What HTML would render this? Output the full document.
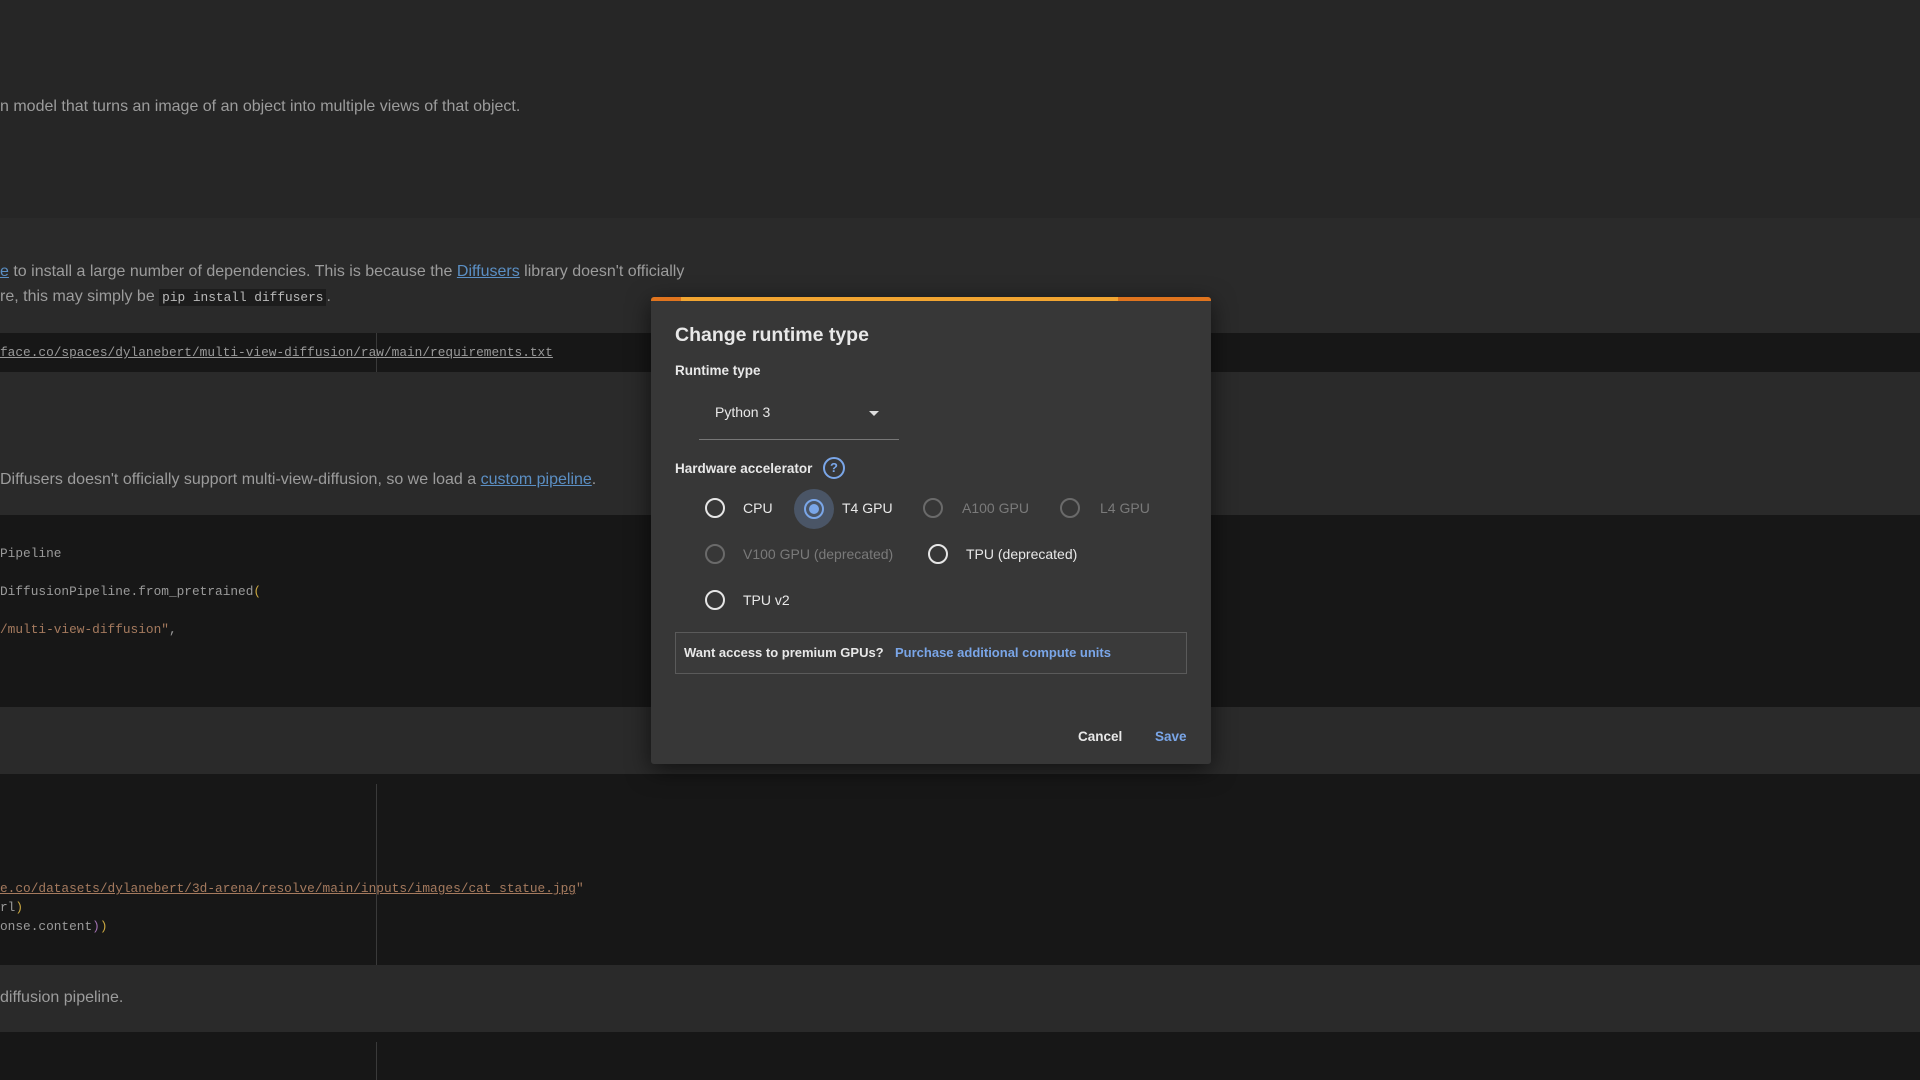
<!DOCTYPE html>
<html><head><meta charset="utf-8"><style>
*{margin:0;padding:0;box-sizing:border-box}
body{width:1920px;height:1080px;overflow:hidden;background:#262626;font-family:"Liberation Sans",Arial,sans-serif;position:relative}
.a{position:absolute;white-space:nowrap}
.band{position:absolute;left:0;width:1920px}
.t{color:#9c9c9c;font-size:16px}
.c{color:#9a9a9a;font-family:"Liberation Mono",monospace;font-size:12.8px}
.lk{color:#5b8fc4;text-decoration:underline}
.str{color:#a57a5e}
.vl{position:absolute;left:376px;width:1px;background:#3a3a3a}
.dlg{position:absolute;left:651px;top:297px;width:560px;height:467px;background:#373737;border-radius:3px;box-shadow:0 6px 24px rgba(0,0,0,.6);overflow:hidden}
.d{position:absolute;white-space:nowrap;color:#e8e8e8}
.r{position:absolute;width:20px;height:20px;border:2px solid #e6e6e6;border-radius:50%}
.r.dis{border-color:#6a6a6a}
.lab{position:absolute;font-size:14px;color:#e8e8e8;white-space:nowrap}
.lab.dis{color:#7a7a7a}
</style></head><body>
<div class="band" style="top:0;height:218px;background:#262626"></div>
<div class="band" style="top:218px;height:115px;background:#2a2a2a"></div>
<div class="band" style="top:333px;height:39px;background:#171717"></div>
<div class="band" style="top:372px;height:143px;background:#2a2a2a"></div>
<div class="band" style="top:515px;height:192px;background:#171717"></div>
<div class="band" style="top:707px;height:67px;background:#2a2a2a"></div>
<div class="band" style="top:774px;height:191px;background:#171717"></div>
<div class="band" style="top:965px;height:67px;background:#2a2a2a"></div>
<div class="band" style="top:1032px;height:48px;background:#171717"></div>
<div class="vl" style="top:333px;height:39px"></div>
<div class="vl" style="top:784px;height:181px"></div>
<div class="vl" style="top:1042px;height:38px"></div>

<div class="a t" style="left:0;top:98px">n model that turns an image of an object into multiple views of that object.</div>
<div class="a t" style="left:0;top:263px"><span class="lk">e</span> to install a large number of dependencies. This is because the <span class="lk">Diffusers</span> library doesn't officially</div>
<div class="a t" style="left:0;top:288px">re, this may simply be <span class="c" style="background:#1c1c1c;padding:1px 3px;color:#bbb">pip install diffusers</span>.</div>
<div class="a c" style="left:0;top:345px;text-decoration:underline">face.co/spaces/dylanebert/multi-view-diffusion/raw/main/requirements.txt</div>
<div class="a t" style="left:0;top:471px">Diffusers doesn't officially support multi-view-diffusion, so we load a <span class="lk">custom pipeline</span>.</div>
<div class="a c" style="left:0;top:546px">Pipeline</div>
<div class="a c" style="left:0;top:584px"> DiffusionPipeline.from_pretrained<span style="color:#c9a640">(</span></div>
<div class="a c" style="left:0;top:622px"><span class="str">/multi-view-diffusion"</span>,</div>
<div class="a c" style="left:0;top:881px"><span class="str" style="text-decoration:underline">e.co/datasets/dylanebert/3d-arena/resolve/main/inputs/images/cat_statue.jpg</span><span class="str">"</span></div>
<div class="a c" style="left:0;top:900px">rl<span style="color:#c9a640">)</span></div>
<div class="a c" style="left:0;top:919px">onse.content<span style="color:#a070b0">)</span><span style="color:#c9a640">)</span></div>
<div class="a t" style="left:0;top:989px">diffusion pipeline.</div>

<div class="dlg">
 <div style="position:absolute;left:0;top:0;height:4px;width:30px;background:#e0741e"></div>
 <div style="position:absolute;left:30px;top:0;height:4px;width:437px;background:#f2a531"></div>
 <div style="position:absolute;left:467px;top:0;height:4px;width:93px;background:#e0741e"></div>
 <div class="d" style="left:24px;top:27px;font-size:19.5px;font-weight:bold">Change runtime type</div>
 <div class="d" style="left:24px;top:66px;font-size:13.5px;font-weight:bold">Runtime type</div>
 <div class="d" style="left:64px;top:107px;font-size:14px">Python 3</div>
 <div style="position:absolute;left:218px;top:114px;width:0;height:0;border-left:5px solid transparent;border-right:5px solid transparent;border-top:5px solid #ddd"></div>
 <div style="position:absolute;left:48px;top:142px;width:200px;height:1px;background:#777"></div>
 <div class="d" style="left:24px;top:164px;font-size:13.5px;font-weight:bold">Hardware accelerator</div>
 <div style="position:absolute;left:172px;top:160px;width:22px;height:22px;border:2px solid #7aa6e8;border-radius:50%;color:#7aa6e8;font-size:13px;font-weight:bold;text-align:center;line-height:18px">?</div>

 <div class="r" style="left:54px;top:201px"></div><div class="lab" style="left:92px;top:203px">CPU</div>
 <div style="position:absolute;left:143px;top:192px;width:40px;height:40px;border-radius:50%;background:#4a5566"></div>
 <div class="r" style="left:153px;top:202px;border-color:#7aa6e8"><div style="position:absolute;left:3px;top:3px;width:10px;height:10px;border-radius:50%;background:#7aa6e8"></div></div>
 <div class="lab" style="left:191px;top:203px">T4 GPU</div>
 <div class="r dis" style="left:272px;top:201px"></div><div class="lab dis" style="left:311px;top:203px">A100 GPU</div>
 <div class="r dis" style="left:409px;top:201px"></div><div class="lab dis" style="left:449px;top:203px">L4 GPU</div>

 <div class="r dis" style="left:54px;top:247px"></div><div class="lab dis" style="left:92px;top:249px">V100 GPU (deprecated)</div>
 <div class="r" style="left:277px;top:247px"></div><div class="lab" style="left:315px;top:249px">TPU (deprecated)</div>
 <div class="r" style="left:54px;top:293px"></div><div class="lab" style="left:92px;top:295px">TPU v2</div>

 <div style="position:absolute;left:24px;top:335px;width:512px;height:42px;border:1px solid #5a5a5a;background:#3a3a3a"></div>
 <div class="d" style="left:33px;top:348px;font-size:13px;font-weight:bold">Want access to premium GPUs?</div>
 <div class="d" style="left:244px;top:348px;font-size:13px;font-weight:bold;color:#7aa6e8">Purchase additional compute units</div>
 <div class="d" style="left:427px;top:432px;font-size:13.5px;font-weight:bold">Cancel</div>
 <div class="d" style="left:504px;top:432px;font-size:13.5px;font-weight:bold;color:#7aa6e8">Save</div>
</div>
</body></html>
